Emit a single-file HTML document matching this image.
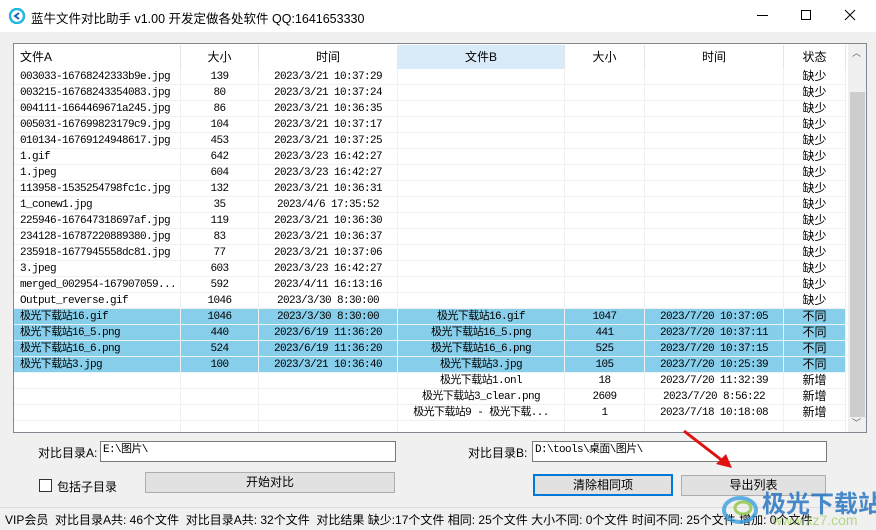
<!DOCTYPE html>
<html><head><meta charset="utf-8"><style>
*{box-sizing:border-box;margin:0;padding:0}
body{width:876px;height:530px;overflow:hidden;background:#f0f0f0;font-family:"Liberation Sans","Noto Sans CJK SC",sans-serif;position:relative}
.abs{position:absolute}
#title{left:0;top:0;width:876px;height:32px;background:#fff;font-size:12px;color:#000}
.mono{font-family:"Liberation Mono","Noto Sans CJK SC",monospace;font-size:11px;letter-spacing:-0.6px}
#list{left:13px;top:43px;width:854px;height:390px;background:#fff;border:1px solid #828790;overflow:hidden}
.hd{position:absolute;top:1px;height:24px;line-height:24px;text-align:center;font-size:12px;border-right:1px solid #e5e5e5;background:#fff}
.row{position:absolute;left:0;width:832px;height:16px;border-bottom:1px solid #f0f0f0}
.row.sel{background:#87ceeb;border-bottom:1px solid #e8f4fa}
.c{position:absolute;top:0;height:16px;line-height:16px;white-space:nowrap;overflow:hidden;border-right:1px solid #f0f0f0}
.cc{text-align:center}
.st{font-size:12px;line-height:15px;letter-spacing:0;font-family:"Liberation Sans","Noto Sans CJK SC",sans-serif}
.btn{background:#e1e1e1;border:1px solid #adadad;font-size:12px;text-align:center;line-height:19px}
.inp{background:#fff;border:1px solid #7a7a7a;height:21px;line-height:17px;padding-left:2px}
.lbl{font-size:12px}
</style></head><body>
<div id="title" class="abs">
 <svg class="abs" style="left:9px;top:8px" width="16" height="16" viewBox="0 0 16 16"><circle cx="8" cy="8" r="7" fill="none" stroke="#1fb6e0" stroke-width="2.5"/><path d="M10 5 L6 8 L10 11" fill="none" stroke="#1a5fbf" stroke-width="2"/></svg>
 <div class="abs" style="left:31px;top:8px;font-size:12.5px">蓝牛文件对比助手 v1.00 开发定做各处软件 QQ:1641653330</div>
 <div class="abs" style="left:757px;top:15px;width:11px;height:1px;background:#000"></div>
 <div class="abs" style="left:801px;top:10px;width:10px;height:10px;border:1px solid #000"></div>
 <svg class="abs" style="left:844px;top:9px" width="12" height="12"><path d="M1 1L11 11M11 1L1 11" stroke="#000" stroke-width="1"/></svg>
</div>
<div id="list" class="abs">
 <div class="hd" style="left:0;width:167px;text-align:left;padding-left:6px">文件A</div>
 <div class="hd" style="left:167px;width:78px">大小</div>
 <div class="hd" style="left:245px;width:139px">时间</div>
 <div class="hd" style="left:384px;width:167px;background:#d9ebf9">文件B</div>
 <div class="hd" style="left:551px;width:80px">大小</div>
 <div class="hd" style="left:631px;width:139px">时间</div>
 <div class="hd" style="left:770px;width:62px">状态</div>
 <div id="rows"></div>
 <div class="abs" style="left:834px;top:0;width:19px;height:388px;background:#f0f0f0"></div>
 <div class="abs" style="left:836px;top:48px;width:15px;height:325px;background:#cdcdcd"></div>
 <div class="abs" style="left:838px;top:2px;font-size:9px;color:#606060">︿</div>
 <div class="abs" style="left:838px;top:372px;font-size:9px;color:#606060">﹀</div>
</div>
<div class="abs lbl" style="left:38px;top:444px">对比目录A:</div>
<div class="abs inp mono" style="left:100px;top:441px;width:296px">E:\图片\</div>
<div class="abs lbl" style="left:468px;top:444px">对比目录B:</div>
<div class="abs inp mono" style="left:532px;top:441px;width:295px">D:\tools\桌面\图片\</div>
<div class="abs" style="left:39px;top:479px;width:13px;height:13px;border:1px solid #333;background:#fff"></div>
<div class="abs lbl" style="left:57px;top:478px">包括子目录</div>
<div class="abs btn" style="left:145px;top:472px;width:250px;height:21px">开始对比</div>
<div class="abs btn" style="left:533px;top:474px;width:140px;height:22px;border:2px solid #0078d7;line-height:18px">清除相同项</div>
<div class="abs btn" style="left:681px;top:475px;width:145px;height:21px">导出列表</div>
<div class="abs" style="left:0;top:507px;width:876px;height:1px;background:#ddd"></div>
<div class="abs" style="left:5px;top:511px;font-size:12px;white-space:nowrap">VIP会员&nbsp; 对比目录A共: 46个文件&nbsp; 对比目录A共: 32个文件&nbsp; 对比结果 缺少:17个文件 相同: 25个文件 大小不同: 0个文件 时间不同: 25个文件 增加: 0个文件</div>
<svg class="abs" style="left:680px;top:428px" width="60" height="45"><path d="M4 3 L48 37" stroke="#e01010" stroke-width="3"/><path d="M52 40 L36 36 L46 26 Z" fill="#e01010"/></svg>
<svg class="abs" style="left:720px;top:490px" width="42" height="36"><ellipse cx="20" cy="20" rx="16" ry="12" fill="none" stroke="#3aa0e0" stroke-width="4" opacity=".8"/><ellipse cx="23" cy="18" rx="8" ry="6" fill="none" stroke="#8cc63f" stroke-width="3" opacity=".8"/></svg>
<div class="abs" style="left:762px;top:484px;font-size:24px;font-weight:bold;color:#1e6fc0;opacity:.8;white-space:nowrap">极光下载站</div>
<div class="abs" style="left:772px;top:512px;font-size:14px;color:#8cc63f;opacity:.6;white-space:nowrap">www.xz7.com</div>
<script>
var d=[
["003033-16768242333b9e.jpg","139","2023/3/21 10:37:29"],
["003215-16768243354083.jpg","80","2023/3/21 10:37:24"],
["004111-1664469671a245.jpg","86","2023/3/21 10:36:35"],
["005031-167699823179c9.jpg","104","2023/3/21 10:37:17"],
["010134-16769124948617.jpg","453","2023/3/21 10:37:25"],
["1.gif","642","2023/3/23 16:42:27"],
["1.jpeg","604","2023/3/23 16:42:27"],
["113958-1535254798fc1c.jpg","132","2023/3/21 10:36:31"],
["1_conew1.jpg","35","2023/4/6 17:35:52"],
["225946-167647318697af.jpg","119","2023/3/21 10:36:30"],
["234128-16787220889380.jpg","83","2023/3/21 10:36:37"],
["235918-1677945558dc81.jpg","77","2023/3/21 10:37:06"],
["3.jpeg","603","2023/3/23 16:42:27"],
["merged_002954-167907059...","592","2023/4/11 16:13:16"],
["Output_reverse.gif","1046","2023/3/30 8:30:00"]];
var h='';
function cell(l,w,t,cls){return '<div class="c '+(cls||'')+'" style="left:'+l+'px;width:'+w+'px">'+t+'</div>';}
function row(i,a,b,st,sel){h+='<div class="row mono'+(sel?' sel':'')+'" style="top:'+(25+i*16)+'px">'+
cell(0,167,'&nbsp;'+(a[0]||''))+cell(167,78,a[1]||'','cc')+cell(245,139,a[2]||'','cc')+
cell(384,167,b[0]||'','cc')+cell(551,80,b[1]||'','cc')+cell(631,139,b[2]||'','cc')+cell(770,62,st,'cc st')+'</div>';}
d.forEach(function(r,i){row(i,r,[],'缺少');});
row(15,["极光下载站16.gif","1046","2023/3/30 8:30:00"],["极光下载站16.gif","1047","2023/7/20 10:37:05"],"不同",1);
row(16,["极光下载站16_5.png","440","2023/6/19 11:36:20"],["极光下载站16_5.png","441","2023/7/20 10:37:11"],"不同",1);
row(17,["极光下载站16_6.png","524","2023/6/19 11:36:20"],["极光下载站16_6.png","525","2023/7/20 10:37:15"],"不同",1);
row(18,["极光下载站3.jpg","100","2023/3/21 10:36:40"],["极光下载站3.jpg","105","2023/7/20 10:25:39"],"不同",1);
row(19,[],["极光下载站1.onl","18","2023/7/20 11:32:39"],"新增");
row(20,[],["极光下载站3_clear.png","2609","2023/7/20 8:56:22"],"新增");
row(21,[],["极光下载站9 - 极光下载...","1","2023/7/18 10:18:08"],"新增");
row(22,[],[],"");
document.getElementById('rows').innerHTML=h;
</script>
</body></html>
